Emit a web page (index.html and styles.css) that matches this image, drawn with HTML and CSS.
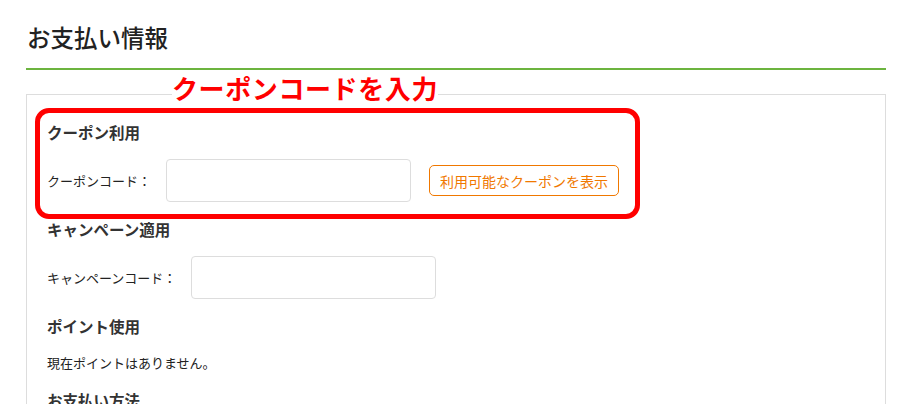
FILE: index.html
```html
<!DOCTYPE html>
<html lang="ja">
<head>
    <meta charset="UTF-8">
    <meta name="viewport" content="width=device-width, initial-scale=1.0">
    <title>お支払い情報</title>
    <link rel="stylesheet" href="styles.css">
</head>
<body>

<div class="page">
    <h1 class="page-title">お支払い情報</h1>

    <div class="payment-box">
        <div class="note-text">クーポンコードを入力</div>
        <div class="note-frame"></div>

        <h2 class="section-title">クーポン利用</h2>
        <div class="form-row">
            <label for="couponCode">クーポンコード：</label>
            <input type="text" id="couponCode" class="code-input">
            <button class="coupon-button">利用可能なクーポンを表示</button>
        </div>

        <h2 class="section-title">キャンペーン適用</h2>
        <div class="form-row">
            <label for="campaignCode">キャンペーンコード：</label>
            <input type="text" id="campaignCode" class="code-input">
        </div>

        <h2 class="section-title">ポイント使用</h2>
        <p class="info-text">現在ポイントはありません。</p>

        <h2 class="section-title">お支払い方法</h2>
    </div>
</div>

</body>
</html>
```

FILE: styles.css
```css
body {
    font-family: "Noto Sans CJK JP", "Noto Sans", sans-serif;
    background: #fff;
    color: #333;
    margin: 0;
}
.page {
    padding: 21px 14px 0 26px;
}
.page-title {
    margin: 0 0 24px;
    padding: 0 0 14px 1px;
    font-size: 23.5px;
    font-weight: 500;
    line-height: 33px;
    color: #222;
    border-bottom: 2px solid #6cb43f;
}
.payment-box {
    position: relative;
    border: 1px solid #ddd;
    padding: 25px 20px 40px;
    display: flex;
    flex-direction: column;
    gap: 15px;
}
.section-title {
    margin: 0;
    font-size: 15.5px;
    font-weight: 700;
    line-height: 24px;
    color: #333;
}
.form-row {
    display: flex;
    align-items: center;
    font-size: 13px;
    color: #222;
}
.form-row label {
    margin-right: 15px;
}
.code-input {
    width: 245px;
    height: 43px;
    box-sizing: border-box;
    border: 1px solid #ddd;
    border-radius: 4px;
    padding: 6px 10px;
    font-size: 14px;
}
.coupon-button {
    margin-left: 18px;
    height: 31px;
    padding: 0 10px;
    background: #fff;
    color: #f07800;
    border: 1px solid #f07800;
    border-radius: 5px;
    font-family: inherit;
    font-size: 14px;
    cursor: pointer;
}
.info-text {
    margin: 0;
    font-size: 13px;
    line-height: 20px;
    color: #222;
}

/* 注記の赤枠 */
.note-frame {
    position: absolute;
    top: 13px;
    left: 8px;
    width: 605px;
    height: 111px;
    box-sizing: border-box;
    border: 5px solid #ff0000;
    border-radius: 14px;
}
.note-text {
    position: absolute;
    top: -20px;
    left: 145px;
    font-size: 26px;
    font-weight: 700;
    line-height: 26px;
    letter-spacing: 0.6px;
    color: #ff0000;
    background: #fff;
}
```
